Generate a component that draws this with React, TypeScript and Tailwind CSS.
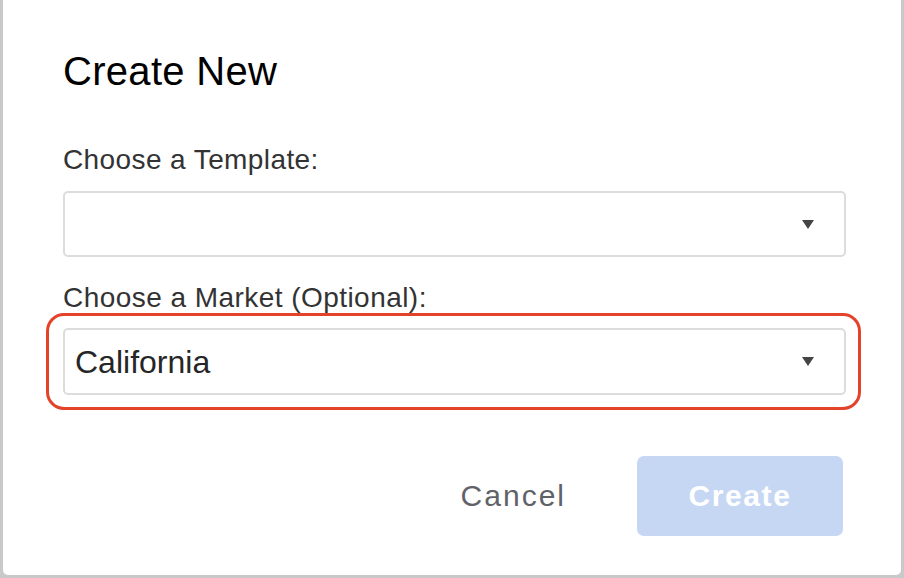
import React from 'react';

const Caret = () => (
  <svg width="12" height="9" viewBox="0 0 12 9" className="shrink-0">
    <polygon points="0,0 12,0 6,9" fill="#444444" />
  </svg>
);

const SelectBox = ({ value, h = 'h-[66px]' }: { value?: string; h?: string }) => (
  <div className={`flex ${h} items-center justify-between rounded-[5px] border-2 border-[#dcdcdc] bg-white pl-[10px] pr-[30px]`}>
    <span className="text-[32px] leading-none text-[#262626]">{value ?? ''}</span>
    <Caret />
  </div>
);

const App = () => {
  return (
    <div className="flex h-[578px] w-[904px] bg-[#c9c9c9] pb-[3px] pl-[3px] pr-[3px] font-['Liberation_Sans',Arial,sans-serif]">
      <div className="flex flex-1 flex-col rounded-b-[5px] bg-white pl-[60px] pr-[55px]">
        {/* Header */}
        <h1 className="mt-[47px] text-[40px] leading-[48px] font-normal tracking-[0.3px] text-black">Create New</h1>

        {/* Template */}
        <label className="mt-[49px] text-[28px] leading-[32px] tracking-[0.4px] text-[#333333]">Choose a Template:</label>
        <div className="mt-[15px]">
          <SelectBox />
        </div>

        {/* Market */}
        <label className="mt-[25px] text-[28px] leading-[32px] tracking-[0.45px] text-[#333333]">Choose a Market (Optional):</label>
        <div className="-mt-px ml-[-17px] mr-[-15px] rounded-[18px] border-[3px] border-[#e5422a] pb-[12px] pl-[14px] pr-[12px] pt-[12px]">
          <SelectBox value="California" h="h-[67px]" />
        </div>

        {/* Actions */}
        <div className="mt-[46px] flex items-center justify-end gap-[47px] pr-[3px]">
          <button className="px-[24px] text-[30px] leading-none tracking-[2px] text-[#5f6368]">Cancel</button>
          <button
            disabled
            className="flex h-[80px] w-[206px] items-center justify-center rounded-[7px] bg-[#c6d7f4] text-[30px] font-bold leading-none tracking-[1.6px] text-white"
          >
            Create
          </button>
        </div>
      </div>
    </div>
  );
};

export default App;
